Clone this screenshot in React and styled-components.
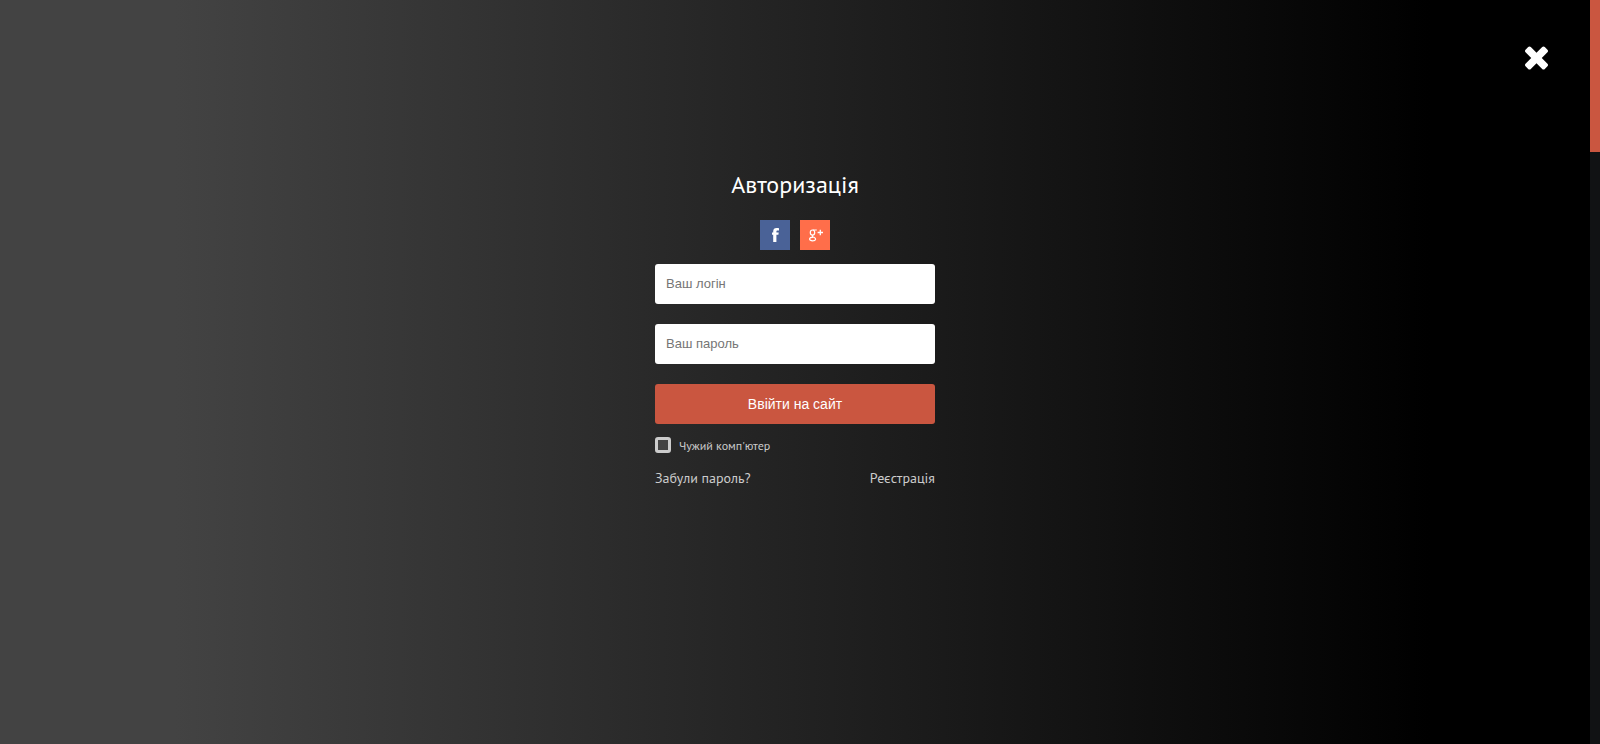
import React from "react";
import styled, { createGlobalStyle } from "styled-components";

const GlobalStyle = createGlobalStyle`
  *, *::before, *::after { box-sizing: border-box; }
  body {
    margin: 0;
    background: #000;
    font-family: "PT Sans", "Noto Sans", sans-serif;
    color: #fff;
  }
`;

const Page = styled.div`
  display: flex;
  min-height: 100vh;
`;

const Overlay = styled.main`
  position: relative;
  flex: 1;
  display: flex;
  flex-direction: column;
  align-items: center;
  padding: 170px 20px 40px;
  background: linear-gradient(to right, #434343 11%, #000 90%);
`;

const CloseButton = styled.button`
  position: absolute;
  top: 40px;
  right: 36px;
  display: flex;
  padding: 6px;
  border: 0;
  background: none;
  color: #fff;
  cursor: pointer;
`;

const ScrollTrack = styled.div`
  width: 10px;
  background: #111214;
`;

const ScrollThumb = styled.div`
  height: 152px;
  background: #ca5640;
`;

const Form = styled.form`
  display: flex;
  flex-direction: column;
  width: 100%;
  max-width: 280px;
`;

const Title = styled.h1`
  margin: 0 0 20px;
  font-size: 24px;
  line-height: 30px;
  font-weight: 400;
  text-align: center;
`;

const SocialRow = styled.div`
  display: flex;
  justify-content: center;
  gap: 10px;
  margin-bottom: 14px;
`;

const SocialLink = styled.a`
  display: block;
  width: 30px;
  height: 30px;
  background: ${({ $color }) => $color};
`;

const Field = styled.input`
  height: 40px;
  margin: 0 0 20px;
  padding: 0 11px 2px;
  border: 0;
  border-radius: 3px;
  background: #fff;
  color: #333;
  font-family: "Liberation Sans", Arial, sans-serif;
  font-size: 13px;
  &::placeholder { color: #757575; opacity: 1; }
`;

const SubmitButton = styled.button`
  height: 40px;
  margin: 0 0 12px;
  padding: 0 10px;
  border: 0;
  border-radius: 3px;
  background: #ca5640;
  color: #fff;
  font-family: "Liberation Sans", Arial, sans-serif;
  font-size: 14px;
  cursor: pointer;
`;

const CheckLabel = styled.label`
  display: flex;
  align-items: center;
  gap: 8px;
  margin-bottom: 14px;
  color: #ccc;
  font-size: 12px;
  line-height: 18px;
`;

const CheckText = styled.span`
  padding-top: 2px;
  line-height: 16px;
`;

const Checkbox = styled.input`
  appearance: none;
  width: 16px;
  height: 16px;
  margin: 0;
  border: 3px solid #ccc;
  border-radius: 3px;
  background: #434343;
  &:checked { background: #ca5640; }
`;

const Links = styled.div`
  display: flex;
  justify-content: space-between;
`;

const TextLink = styled.a`
  color: #ccc;
  font-size: 14px;
  line-height: 20px;
  text-decoration: none;
`;

export default function App() {
  return (
    <Page>
      <GlobalStyle />
      <Overlay>
        <CloseButton type="button" aria-label="Закрити">
          <svg width="23" height="24" viewBox="110 366 1188 1188" fill="currentColor" aria-hidden="true">
            <path d="M1298 1322q0 40-28 68l-136 136q-28 28-68 28t-68-28l-294-294-294 294q-28 28-68 28t-68-28l-136-136q-28-28-28-68t28-68l294-294-294-294q-28-28-28-68t28-68l136-136q28-28 68-28t68 28l294 294 294-294q28-28 68-28t68 28l136 136q28 28 28 68t-28 68l-294 294 294 294q28 28 28 68z" />
          </svg>
        </CloseButton>
        <Form onSubmit={(e) => e.preventDefault()}>
          <Title>Авторизація</Title>
          <SocialRow>
            <SocialLink href="#facebook" $color="#4a6297" aria-label="Facebook">
              <svg width="30" height="30" viewBox="0 0 30 30" fill="#fff" aria-hidden="true">
                <path d="M13.2 22v-7.3H12v-2.3h1.2v-1c0-2.3 1.2-3.4 3.4-3.4.9 0 1.7.1 2.4.3v2.2h-1.3c-1 0-1.3.4-1.3 1.1v.8h2.3l-.3 2.3h-2V22z" />
              </svg>
            </SocialLink>
            <SocialLink href="#google" $color="#ff6e4a" aria-label="Google Plus">
              <svg width="30" height="30" viewBox="0 0 30 30" fill="none" stroke="#fff" strokeWidth="1.2" aria-hidden="true">
                <ellipse cx="12.5" cy="12.6" rx="2.2" ry="2.6" />
                <path d="M16.8 10h-4M13 15.2c-1 .7-.8 1.3.2 1.8 1.4.7 2.7 1 2.4 2.3-.5 2-5.6 2-6-.1-.2-1.4 1.6-2.1 3.6-2.1" />
                <path strokeWidth="1.3" d="M20.3 9.8v5.4M17.6 12.5H23" />
              </svg>
            </SocialLink>
          </SocialRow>
          <Field type="text" name="login" placeholder="Ваш логін" aria-label="Ваш логін" />
          <Field type="password" name="password" placeholder="Ваш пароль" aria-label="Ваш пароль" />
          <SubmitButton type="submit">Ввійти на сайт</SubmitButton>
          <CheckLabel>
            <Checkbox type="checkbox" name="foreign" />
            <CheckText>Чужий комп'ютер</CheckText>
          </CheckLabel>
          <Links>
            <TextLink href="#lost">Забули пароль?</TextLink>
            <TextLink href="#register">Реєстрація</TextLink>
          </Links>
        </Form>
      </Overlay>
      <ScrollTrack>
        <ScrollThumb />
      </ScrollTrack>
    </Page>
  );
}
